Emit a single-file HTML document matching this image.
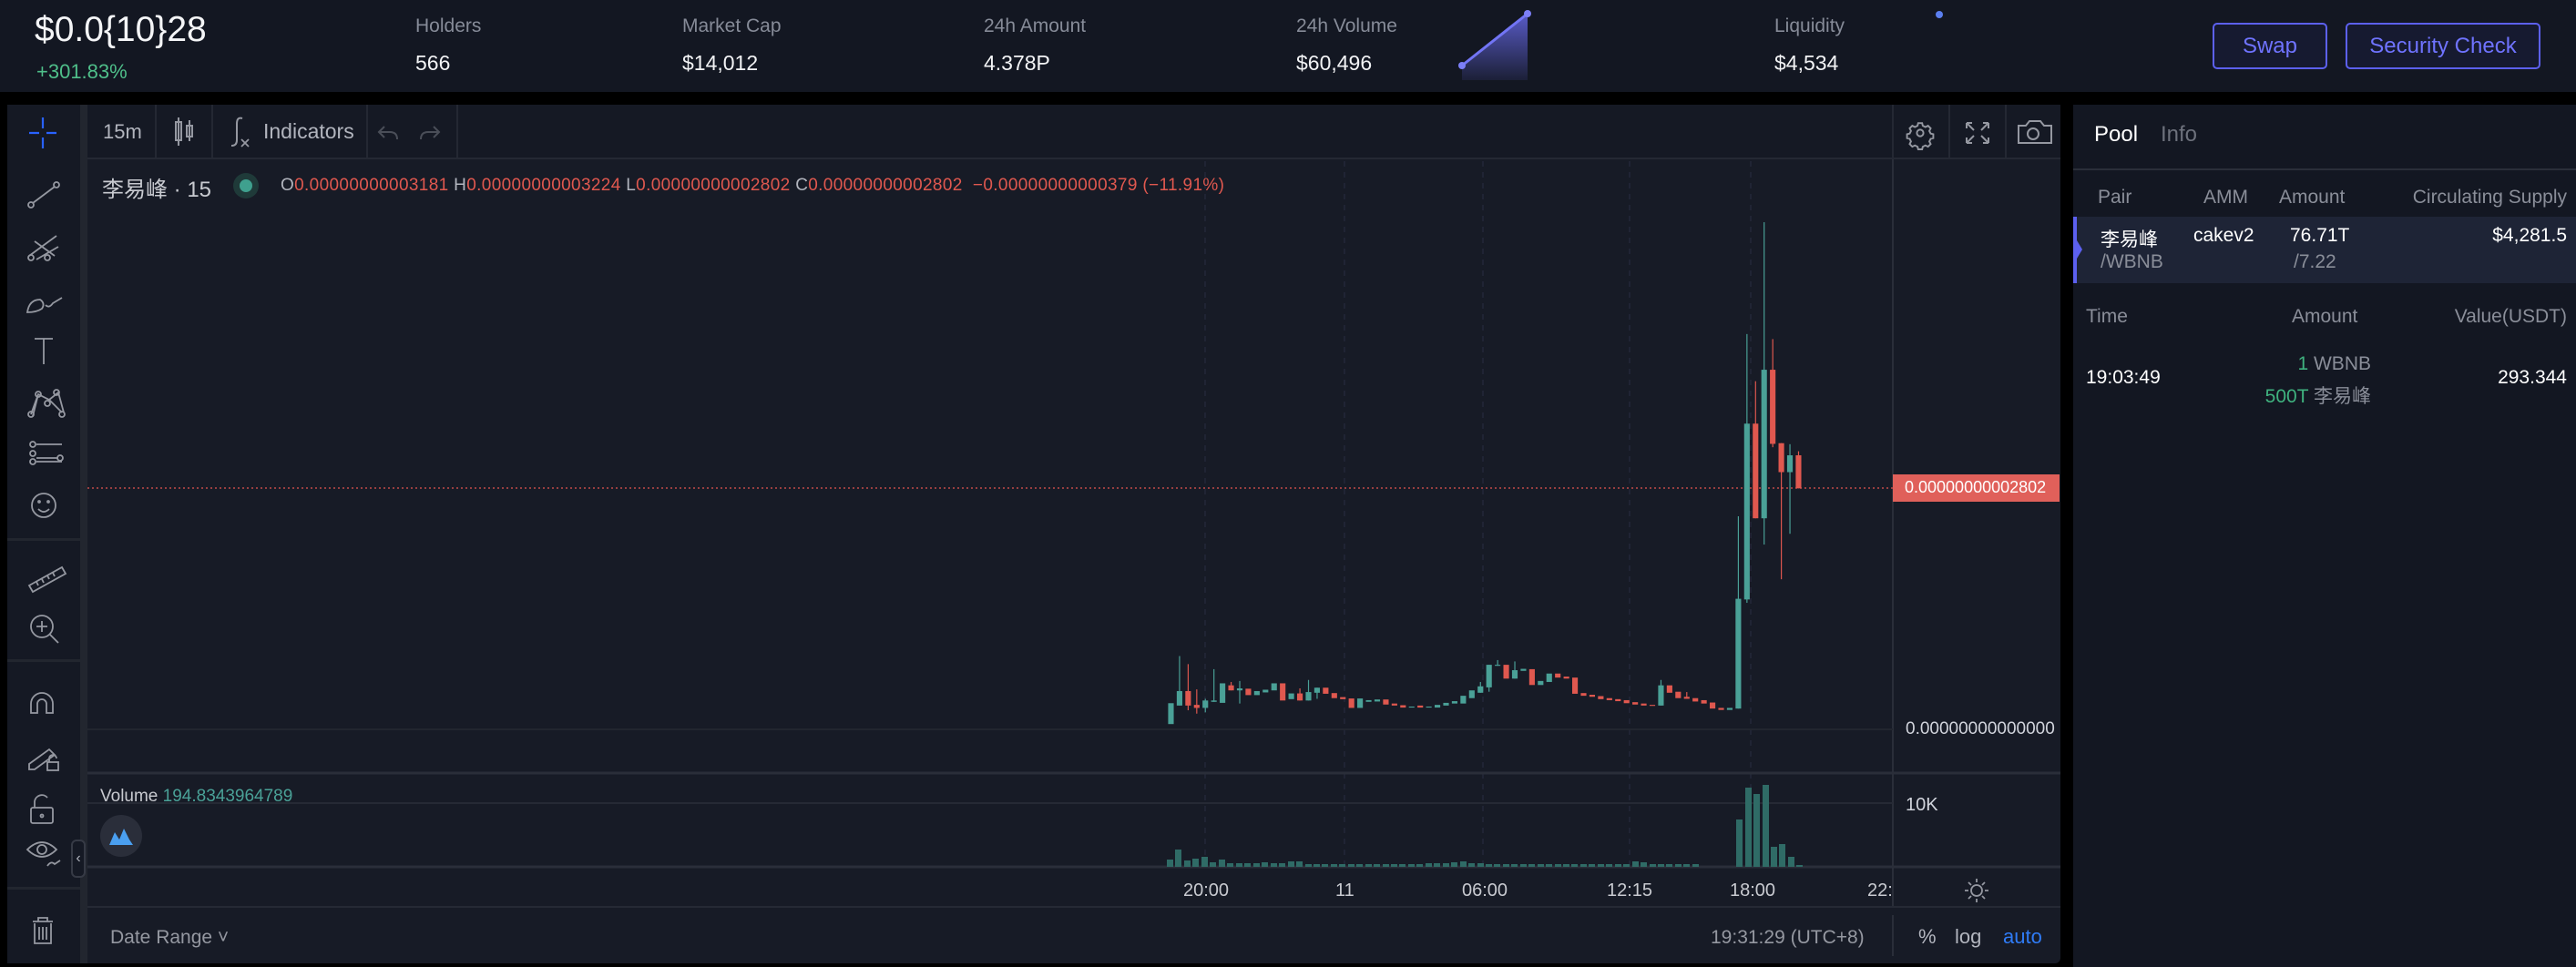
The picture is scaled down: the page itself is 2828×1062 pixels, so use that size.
<!DOCTYPE html>
<html><head><meta charset="utf-8">
<style>
*{margin:0;padding:0;box-sizing:border-box}
body{width:2828px;height:1062px;background:#000;overflow:hidden;font-family:"Liberation Sans","Noto Sans CJK SC",sans-serif;color:#e6e8ee;position:relative}
.a{position:absolute;white-space:nowrap}
.lbl{color:#868b98;font-size:21px}
.val{color:#f2f3f5;font-size:23px}
.btn{position:absolute;border:2px solid #5c60f0;border-radius:5px;background:#161a30;color:#6f73ff;font-size:24px;display:flex;align-items:center;justify-content:center}
.g{fill:#4aa197}.r{fill:#e0584f}
.gray{color:#8a8e99}
</style></head><body>
<!-- header -->
<div class="a" style="left:0;top:0;width:2828px;height:101px;background:#131722"></div>
<div class="a" style="left:38px;top:11px;font-size:39px;color:#f4f5f7">$0.0{10}28</div>
<div class="a" style="left:40px;top:66px;font-size:22px;color:#4fbf8a">+301.83%</div>
<div class="a lbl" style="left:456px;top:17px">Holders</div><div class="a val" style="left:456px;top:56px">566</div>
<div class="a lbl" style="left:749px;top:17px">Market Cap</div><div class="a val" style="left:749px;top:56px">$14,012</div>
<div class="a lbl" style="left:1080px;top:17px">24h Amount</div><div class="a val" style="left:1080px;top:56px">4.378P</div>
<div class="a lbl" style="left:1423px;top:17px">24h Volume</div><div class="a val" style="left:1423px;top:56px">$60,496</div>
<div class="a lbl" style="left:1948px;top:17px">Liquidity</div><div class="a val" style="left:1948px;top:56px">$4,534</div>
<svg class="a" style="left:0;top:0" width="2828" height="101">
<defs><linearGradient id="sg" x1="0" y1="0" x2="0" y2="1"><stop offset="0" stop-color="#6a6cf0" stop-opacity=".8"/><stop offset="1" stop-color="#6a6cf0" stop-opacity=".1"/></linearGradient></defs>
<polygon points="1605,72 1677,15 1677,88 1605,88" fill="url(#sg)"/>
<line x1="1605" y1="72" x2="1677" y2="15" stroke="#7275f5" stroke-width="3"/>
<circle cx="1605" cy="72" r="4" fill="#7c7ff7"/><circle cx="1677" cy="15" r="4" fill="#7c7ff7"/>
<circle cx="2129" cy="16" r="4" fill="#5b7ff0"/>
</svg>
<div class="btn" style="left:2429px;top:25px;width:126px;height:51px">Swap</div>
<div class="btn" style="left:2575px;top:25px;width:214px;height:51px">Security Check</div>

<!-- chart container -->
<div class="a" style="left:8px;top:115px;width:2254px;height:943px;background:#171b26;border-radius:0 6px 6px 0"></div>
<div class="a" style="left:8px;top:115px;width:80px;height:943px;background:#151924"></div>
<div class="a" style="left:88px;top:115px;width:8px;height:943px;background:#22262f"></div>
<div class="a" style="left:8px;top:591px;width:80px;height:3px;background:#22262f"></div>
<div class="a" style="left:8px;top:724px;width:80px;height:3px;background:#22262f"></div>
<div class="a" style="left:8px;top:974px;width:80px;height:3px;background:#22262f"></div>
<!-- top toolbar -->
<div class="a" style="left:96px;top:115px;width:2166px;height:60px;background:#151924;border-bottom:2px solid #242833"></div>
<div class="a" style="left:170px;top:115px;width:2px;height:60px;background:#242833"></div>
<div class="a" style="left:232px;top:115px;width:2px;height:60px;background:#242833"></div>
<div class="a" style="left:402px;top:115px;width:2px;height:60px;background:#242833"></div>
<div class="a" style="left:501px;top:115px;width:2px;height:60px;background:#242833"></div>
<div class="a" style="left:2077px;top:115px;width:2px;height:60px;background:#242833"></div>
<div class="a" style="left:2139px;top:115px;width:2px;height:60px;background:#242833"></div>
<div class="a" style="left:2201px;top:115px;width:2px;height:60px;background:#242833"></div>
<div class="a" style="left:113px;top:132px;font-size:22px;color:#b2b5be">15m</div>
<div class="a" style="left:289px;top:131px;font-size:23px;color:#b2b5be">Indicators</div>
<svg class="a" style="left:0;top:115px" width="2262" height="60" fill="none" stroke="#9598a1" stroke-width="2">
<rect x="193" y="19" width="6" height="20"/><line x1="196" y1="14" x2="196" y2="45"/>
<rect x="205" y="23" width="6" height="12"/><line x1="208" y1="17" x2="208" y2="40"/>
<path d="M266 15 q-6 -2 -6 6 v18 q0 6 -6 6"/><path d="M265 38 l8 8 M273 38 l-8 8" stroke-width="1.8"/>
<path d="M422 24 l-6 6 6 6 M416 30 h12 q8 0 8 8" stroke="#4a4e58"/>
<path d="M476 24 l6 6 -6 6 M482 30 h-12 q-8 0 -8 8" stroke="#4a4e58"/>
<g transform="translate(2108,31) scale(0.72)" stroke-width="2.7"><circle r="5"/><path d="M-3,-15 h6 l1,4 4,2 4,-2 4,4 -2,4 2,4 4,1 v6 l-4,1 -2,4 2,4 -4,4 -4,-2 -4,2 -1,4 h-6 l-1,-4 -4,-2 -4,2 -4,-4 2,-4 -2,-4 -4,-1 v-6 l4,-1 2,-4 -2,-4 4,-4 4,2 4,-2z"/></g>
<path d="M2159 20 l8 8 M2159 20 v6 M2159 20 h6 M2183 20 l-8 8 M2183 20 v6 M2183 20 h-6 M2159 42 l8 -8 M2159 42 v-6 M2159 42 h6 M2183 42 l-8 -8 M2183 42 v-6 M2183 42 h-6"/>
<path d="M2216 23 h8 l4 -5 h12 l4 5 h8 v19 h-36z"/><circle cx="2232" cy="32" r="6"/>
</svg>
<!-- left tools -->
<svg class="a" style="left:8px;top:115px" width="80" height="943" fill="none" stroke="#9598a1" stroke-width="1.8">
<path d="M39 14 v12 M39 36 v12 M24 31 h11 M43 31 h11" stroke="#2962ff" stroke-width="2.2"/>
<circle cx="26" cy="110" r="3"/><circle cx="54" cy="88" r="3"/><line x1="28" y1="108" x2="52" y2="90"/>
<path d="M24 166 l30 -22 M30 150 l22 16 M32 170 l24 -14"/><circle cx="26" cy="168" r="3"/><circle cx="44" cy="168" r="3"/>
<path d="M22 228 q2 -14 14 -14 q6 4 2 10 q-6 4 -16 4z M42 220 q4 4 8 -2 l10 -6"/>
<path d="M30 257 h20 M40 257 v28"/>
<path d="M26 340 l8 -22 l12 6 l10 -8 l6 22 M34 318 l-6 24 M46 324 l14 14"/><circle cx="34" cy="318" r="3"/><circle cx="54" cy="316" r="3"/><circle cx="26" cy="340" r="3"/><circle cx="60" cy="340" r="3"/><circle cx="44" cy="328" r="3"/>
<path d="M32 373 h28 M32 392 h28 M32 388 h24" /><circle cx="28" cy="373" r="3"/><circle cx="28" cy="392" r="3"/><circle cx="28" cy="383" r="3"/><circle cx="58" cy="388" r="3"/>
<circle cx="40" cy="440" r="13"/><path d="M34 444 q6 6 12 0"/><circle cx="35" cy="436" r="1"/><circle cx="45" cy="436" r="1"/>
<path d="M24 528 l36 -20 l4 7 l-36 20z M32 524 l2 4 M38 521 l2 4 M44 517 l2 4 M50 514 l2 4"/>
<circle cx="38" cy="573" r="12"/><path d="M32 573 h12 M38 567 v12 M47 582 l9 9"/>
<path d="M26 668 v-10 a12 12 0 0 1 24 0 v10 h-7 v-10 a5 5 0 0 0 -10 0 v10z"/>
<path d="M24 724 l22 -16 l6 6 l-22 16 h-6z"/><rect x="44" y="722" width="12" height="9"/><path d="M46 722 v-4 a4 4 0 0 1 8 0"/>
<rect x="26" y="772" width="24" height="17" rx="2"/><path d="M30 772 v-7 a8 8 0 0 1 14 -4"/><circle cx="38" cy="781" r="1.5"/>
<path d="M22 818 q16 -16 32 0 q-16 16 -32 0z"/><circle cx="38" cy="818" r="5"/><path d="M44 836 q4 -6 8 -2 l6 -4"/>
<path d="M28 897 h22 M34 897 v-4 h10 v4 M30 899 v22 h18 v-22 M35 903 v14 M39 903 v14 M43 903 v14"/>
</svg>
<div class="a" style="left:78px;top:922px;width:16px;height:42px;border:2px solid #363a45;border-radius:6px;background:#151924;color:#b2b5be;font-size:16px;text-align:center;line-height:38px">‹</div>

<!-- main chart -->
<svg class="a" style="left:0;top:0" width="2262" height="1062">
<g stroke="#242838" stroke-width="1.5" stroke-dasharray="6 6">
<line x1="1323" y1="177" x2="1323" y2="952"/><line x1="1476" y1="177" x2="1476" y2="952"/><line x1="1628" y1="177" x2="1628" y2="952"/><line x1="1789" y1="177" x2="1789" y2="952"/><line x1="1922" y1="177" x2="1922" y2="952"/>
</g>
<line x1="2078" y1="175" x2="2078" y2="996" stroke="#2a2e39" stroke-width="2"/>
<line x1="96" y1="801" x2="2078" y2="801" stroke="#22262f" stroke-width="2"/>
<line x1="96" y1="849" x2="2262" y2="849" stroke="#2a2e39" stroke-width="3"/>
<line x1="96" y1="882" x2="2078" y2="882" stroke="#262a35" stroke-width="2"/>
<line x1="96" y1="952" x2="2262" y2="952" stroke="#2a2e39" stroke-width="3"/>
<line x1="96" y1="996" x2="2262" y2="996" stroke="#262a35" stroke-width="2"/>
<line x1="2078" y1="1005" x2="2078" y2="1050" stroke="#2a2e39" stroke-width="2"/>
<line x1="96" y1="536" x2="2078" y2="536" stroke="#c04a48" stroke-width="1.5" stroke-dasharray="2 3"/>
<rect x="2078" y="521" width="183" height="30" fill="#e0605a"/>
<g transform="translate(1260,230) scale(0.4719,0.3699)">
<rect class="g" x="47.5" y="1466" width="13" height="62"/>
<rect class="g" x="72.8" y="1326" width="2.5" height="147"/><rect class="g" x="67.5" y="1430" width="13" height="43"/>
<rect class="r" x="92.8" y="1350" width="2.5" height="137"/><rect class="r" x="87.5" y="1430" width="13" height="43"/>
<rect class="r" x="112.8" y="1425" width="2.5" height="72"/><rect class="r" x="107.5" y="1471" width="13" height="9"/>
<rect class="g" x="132.8" y="1453" width="2.5" height="40"/><rect class="g" x="127.5" y="1458" width="13" height="22"/>
<rect class="g" x="152.8" y="1365" width="2.5" height="97"/><rect class="g" x="147.5" y="1458" width="13" height="4"/>
<rect class="g" x="167.5" y="1407" width="13" height="58"/>
<rect class="r" x="192.8" y="1403" width="2.5" height="25"/><rect class="r" x="187.5" y="1413" width="13" height="15"/>
<rect class="g" x="212.8" y="1400" width="2.5" height="67"/><rect class="g" x="207.5" y="1422" width="13" height="6"/>
<rect class="r" x="227.5" y="1423" width="13" height="19"/>
<rect class="g" x="247.5" y="1430" width="13" height="12"/>
<rect class="g" x="267.5" y="1426" width="13" height="8"/>
<rect class="g" x="287.5" y="1407" width="13" height="21"/>
<rect class="r" x="307.5" y="1407" width="13" height="51"/>
<rect class="g" x="327.5" y="1437" width="13" height="17"/>
<rect class="r" x="352.8" y="1422" width="2.5" height="36"/><rect class="r" x="347.5" y="1437" width="13" height="21"/>
<rect class="g" x="372.8" y="1397" width="2.5" height="61"/><rect class="g" x="367.5" y="1433" width="13" height="25"/>
<rect class="g" x="392.8" y="1420" width="2.5" height="33"/><rect class="g" x="387.5" y="1420" width="13" height="15"/>
<rect class="r" x="407.5" y="1420" width="13" height="18"/>
<rect class="r" x="427.5" y="1436" width="13" height="15"/>
<rect class="r" x="447.5" y="1448" width="13" height="6"/>
<rect class="r" x="467.5" y="1452" width="13" height="28"/>
<rect class="g" x="487.5" y="1452" width="13" height="28"/>
<rect class="g" x="507.5" y="1457" width="13" height="5"/>
<rect class="g" x="527.5" y="1455" width="13" height="6"/>
<rect class="r" x="547.5" y="1455" width="13" height="15"/>
<rect class="r" x="567.5" y="1467" width="13" height="6"/>
<rect class="r" x="587.5" y="1472" width="13" height="7"/>
<rect class="g" x="607.5" y="1476" width="13" height="3"/>
<rect class="r" x="627.5" y="1473" width="13" height="6"/>
<rect class="g" x="647.5" y="1476" width="13" height="3"/>
<rect class="g" x="667.5" y="1471" width="13" height="8"/>
<rect class="g" x="687.5" y="1465" width="13" height="8"/>
<rect class="g" x="707.5" y="1460" width="13" height="7"/>
<rect class="g" x="727.5" y="1444" width="13" height="23"/>
<rect class="g" x="747.5" y="1428" width="13" height="23"/>
<rect class="g" x="772.8" y="1403" width="2.5" height="32"/><rect class="g" x="767.5" y="1416" width="13" height="19"/>
<rect class="g" x="792.8" y="1352" width="2.5" height="80"/><rect class="g" x="787.5" y="1352" width="13" height="67"/>
<rect class="g" x="812.8" y="1338" width="2.5" height="17"/><rect class="g" x="807.5" y="1352" width="13" height="3"/>
<rect class="r" x="827.5" y="1352" width="13" height="41"/>
<rect class="g" x="852.8" y="1342" width="2.5" height="51"/><rect class="g" x="847.5" y="1368" width="13" height="25"/>
<rect class="g" x="867.5" y="1364" width="13" height="6"/>
<rect class="r" x="887.5" y="1365" width="13" height="47"/>
<rect class="g" x="907.5" y="1400" width="13" height="12"/>
<rect class="g" x="927.5" y="1378" width="13" height="25"/>
<rect class="r" x="947.5" y="1378" width="13" height="12"/>
<rect class="r" x="967.5" y="1387" width="13" height="6"/>
<rect class="r" x="987.5" y="1390" width="13" height="48"/>
<rect class="r" x="1007.5" y="1436" width="13" height="8"/>
<rect class="r" x="1027.5" y="1441" width="13" height="6"/>
<rect class="r" x="1047.5" y="1445" width="13" height="9"/>
<rect class="r" x="1067.5" y="1451" width="13" height="6"/>
<rect class="r" x="1087.5" y="1454" width="13" height="6"/>
<rect class="r" x="1107.5" y="1457" width="13" height="9"/>
<rect class="r" x="1127.5" y="1463" width="13" height="7"/>
<rect class="r" x="1147.5" y="1467" width="13" height="6"/>
<rect class="r" x="1167.5" y="1471" width="13" height="3"/>
<rect class="g" x="1192.8" y="1397" width="2.5" height="76"/><rect class="g" x="1187.5" y="1413" width="13" height="60"/>
<rect class="r" x="1207.5" y="1413" width="13" height="22"/>
<rect class="r" x="1227.5" y="1432" width="13" height="19"/>
<rect class="r" x="1252.8" y="1433" width="2.5" height="20"/><rect class="r" x="1247.5" y="1447" width="13" height="6"/>
<rect class="r" x="1267.5" y="1451" width="13" height="10"/>
<rect class="r" x="1287.5" y="1457" width="13" height="10"/>
<rect class="r" x="1307.5" y="1464" width="13" height="18"/>
<rect class="r" x="1327.5" y="1480" width="13" height="6"/>
<rect class="g" x="1347.5" y="1480" width="13" height="6"/>
<rect class="g" x="1372.8" y="911" width="2.5" height="571"/><rect class="g" x="1367.5" y="1156" width="13" height="326"/>
<rect class="g" x="1392.8" y="370" width="2.5" height="798"/><rect class="g" x="1387.5" y="636" width="13" height="522"/>
<rect class="r" x="1412.8" y="510" width="2.5" height="407"/><rect class="r" x="1407.5" y="636" width="13" height="281"/>
<rect class="g" x="1432.8" y="38" width="2.5" height="957"/><rect class="g" x="1427.5" y="476" width="13" height="441"/>
<rect class="r" x="1452.8" y="385" width="2.5" height="321"/><rect class="r" x="1447.5" y="476" width="13" height="220"/>
<rect class="r" x="1472.8" y="694" width="2.5" height="404"/><rect class="r" x="1467.5" y="694" width="13" height="86"/>
<rect class="g" x="1492.8" y="697" width="2.5" height="266"/><rect class="g" x="1487.5" y="730" width="13" height="50"/>
<rect class="r" x="1512.8" y="718" width="2.5" height="110"/><rect class="r" x="1507.5" y="730" width="13" height="98"/>
</g>
<g fill="#2f6b66">
<rect x="1281" y="944" width="7" height="8"/><rect x="1290" y="933" width="7" height="19"/><rect x="1300" y="945" width="7" height="7"/><rect x="1309" y="943" width="7" height="9"/><rect x="1319" y="941" width="7" height="11"/><rect x="1328" y="947" width="7" height="5"/><rect x="1338" y="944" width="7" height="8"/><rect x="1347" y="948" width="7" height="4"/><rect x="1357" y="948" width="7" height="4"/><rect x="1366" y="948" width="7" height="4"/><rect x="1376" y="948" width="7" height="4"/><rect x="1385" y="947" width="7" height="5"/><rect x="1395" y="948" width="7" height="4"/><rect x="1404" y="948" width="7" height="4"/><rect x="1414" y="946" width="7" height="6"/><rect x="1423" y="946" width="7" height="6"/><rect x="1433" y="949" width="7" height="3"/><rect x="1442" y="949" width="7" height="3"/><rect x="1451" y="949" width="7" height="3"/><rect x="1461" y="949" width="7" height="3"/><rect x="1470" y="949" width="7" height="3"/><rect x="1480" y="949" width="7" height="3"/><rect x="1489" y="949" width="7" height="3"/><rect x="1499" y="949" width="7" height="3"/><rect x="1508" y="949" width="7" height="3"/><rect x="1518" y="949" width="7" height="3"/><rect x="1527" y="949" width="7" height="3"/><rect x="1536" y="949" width="7" height="3"/><rect x="1546" y="949" width="7" height="3"/><rect x="1555" y="949" width="7" height="3"/><rect x="1565" y="948" width="7" height="4"/><rect x="1574" y="948" width="7" height="4"/><rect x="1584" y="948" width="7" height="4"/><rect x="1593" y="947" width="7" height="5"/><rect x="1603" y="946" width="7" height="6"/><rect x="1612" y="948" width="7" height="4"/><rect x="1622" y="948" width="7" height="4"/><rect x="1631" y="949" width="7" height="3"/><rect x="1640" y="949" width="7" height="3"/><rect x="1650" y="949" width="7" height="3"/><rect x="1659" y="949" width="7" height="3"/><rect x="1669" y="949" width="7" height="3"/><rect x="1678" y="949" width="7" height="3"/><rect x="1688" y="949" width="7" height="3"/><rect x="1697" y="949" width="7" height="3"/><rect x="1707" y="949" width="7" height="3"/><rect x="1716" y="949" width="7" height="3"/><rect x="1725" y="949" width="7" height="3"/><rect x="1735" y="949" width="7" height="3"/><rect x="1744" y="949" width="7" height="3"/><rect x="1754" y="949" width="7" height="3"/><rect x="1763" y="949" width="7" height="3"/><rect x="1773" y="949" width="7" height="3"/><rect x="1782" y="949" width="7" height="3"/><rect x="1792" y="946" width="7" height="6"/><rect x="1801" y="947" width="7" height="5"/><rect x="1811" y="949" width="7" height="3"/><rect x="1820" y="949" width="7" height="3"/><rect x="1829" y="949" width="7" height="3"/><rect x="1839" y="949" width="7" height="3"/><rect x="1848" y="949" width="7" height="3"/><rect x="1858" y="949" width="7" height="3"/>
<rect x="1906" y="900" width="7" height="52"/><rect x="1916" y="865" width="7" height="87"/><rect x="1925" y="872" width="7" height="80"/><rect x="1935" y="862" width="7" height="90"/><rect x="1944" y="930" width="7" height="22"/><rect x="1953" y="927" width="7" height="25"/><rect x="1963" y="941" width="7" height="11"/><rect x="1972" y="950" width="7" height="2"/>
</g>
<circle cx="270" cy="204" r="14" fill="#1f3a39"/><circle cx="270" cy="204" r="7" fill="#3fa08e"/>
<circle cx="133" cy="918" r="23" fill="#2a2e3a"/>
<path d="M120 928 l6 -14 l5 8 l5 -12 l6 12 l4 6z" fill="#4a9ff0"/>
<g fill="none" stroke="#9598a1" stroke-width="1.8"><circle cx="2170" cy="978" r="6"/><path d="M2170 965 v4 M2170 987 v4 M2157 978 h4 M2179 978 h4 M2161 969 l3 3 M2176 984 l3 3 M2179 969 l-3 3 M2164 984 l-3 3"/></g>
</svg>
<div class="a" style="left:112px;top:188px;font-size:24px;color:#c8cad0">李易峰 · 15</div>
<div class="a" style="left:308px;top:193px;font-size:19px;color:#e0584f;letter-spacing:0.35px"><span style="color:#b2b5be">O</span>0.00000000003181 <span style="color:#b2b5be">H</span>0.00000000003224 <span style="color:#b2b5be">L</span>0.00000000002802 <span style="color:#b2b5be">C</span>0.00000000002802 &nbsp;−0.00000000000379 (−11.91%)</div>
<div class="a" style="left:2091px;top:525px;font-size:18px;color:#fff">0.00000000002802</div>
<div class="a" style="left:2092px;top:790px;font-size:19px;color:#d1d4dc">0.00000000000000</div>
<div class="a" style="left:110px;top:864px;font-size:19px;color:#c8cad0">Volume <span style="color:#4aa197">194.8343964789</span></div>
<div class="a" style="left:2092px;top:873px;font-size:20px;color:#d1d4dc">10K</div>
<div class="a" style="top:967px;font-size:20px;color:#c8cad0;left:1299px">20:00</div>
<div class="a" style="top:967px;font-size:20px;color:#c8cad0;left:1466px">11</div>
<div class="a" style="top:967px;font-size:20px;color:#c8cad0;left:1605px">06:00</div>
<div class="a" style="top:967px;font-size:20px;color:#c8cad0;left:1764px">12:15</div>
<div class="a" style="top:967px;font-size:20px;color:#c8cad0;left:1899px">18:00</div>
<div class="a" style="top:967px;font-size:20px;color:#c8cad0;left:2050px">22:</div>
<div class="a" style="left:121px;top:1018px;font-size:21px;color:#9598a1">Date Range ˅</div>
<div class="a" style="left:1878px;top:1018px;font-size:21px;color:#9598a1">19:31:29 (UTC+8)</div>
<div class="a" style="left:2106px;top:1016px;font-size:22px;color:#b2b5be">%</div>
<div class="a" style="left:2146px;top:1016px;font-size:22px;color:#b2b5be">log</div>
<div class="a" style="left:2199px;top:1016px;font-size:22px;color:#2f7bf5">auto</div>

<!-- right panel -->
<div class="a" style="left:2276px;top:115px;width:552px;height:947px;background:#131722"></div>
<div class="a" style="left:2299px;top:134px;font-size:24px;color:#fff">Pool</div>
<div class="a" style="left:2372px;top:134px;font-size:24px;color:#6d717c">Info</div>
<div class="a" style="left:2276px;top:185px;width:552px;height:2px;background:#2a2e39"></div>
<div class="a gray" style="left:2303px;top:205px;font-size:21px">Pair</div>
<div class="a gray" style="left:2419px;top:205px;font-size:21px">AMM</div>
<div class="a gray" style="left:2502px;top:205px;font-size:21px">Amount</div>
<div class="a gray" style="right:10px;top:205px;font-size:21px">Circulating Supply</div>
<div class="a" style="left:2276px;top:238px;width:552px;height:73px;background:#1e2436;border-left:4px solid #5c60f0"></div>
<svg class="a" style="left:2280px;top:264px" width="8" height="20"><path d="M0 0 L6 10 L0 20z" fill="#5c60f0"/></svg>
<div class="a" style="left:2306px;top:247px;font-size:21px;color:#fff">李易峰</div>
<div class="a" style="left:2306px;top:276px;font-size:21px;color:#8a8e99">/WBNB</div>
<div class="a" style="left:2408px;top:247px;font-size:21px;color:#fff">cakev2</div>
<div class="a" style="left:2514px;top:247px;font-size:21px;color:#fff">76.71T</div>
<div class="a" style="left:2518px;top:276px;font-size:21px;color:#8a8e99">/7.22</div>
<div class="a" style="right:10px;top:247px;font-size:21px;color:#fff">$4,281.5</div>
<div class="a gray" style="left:2290px;top:336px;font-size:21px">Time</div>
<div class="a gray" style="left:2516px;top:336px;font-size:21px">Amount</div>
<div class="a gray" style="right:10px;top:336px;font-size:21px">Value(USDT)</div>
<div class="a" style="left:2290px;top:403px;font-size:21px;color:#fff">19:03:49</div>
<div class="a" style="right:225px;top:388px;font-size:21px;color:#8a8e99"><span style="color:#3fb27f">1</span> WBNB</div>
<div class="a" style="right:225px;top:419px;font-size:21px;color:#8a8e99"><span style="color:#3fb27f">500T</span> 李易峰</div>
<div class="a" style="right:10px;top:403px;font-size:21px;color:#fff">293.344</div>
</body></html>
